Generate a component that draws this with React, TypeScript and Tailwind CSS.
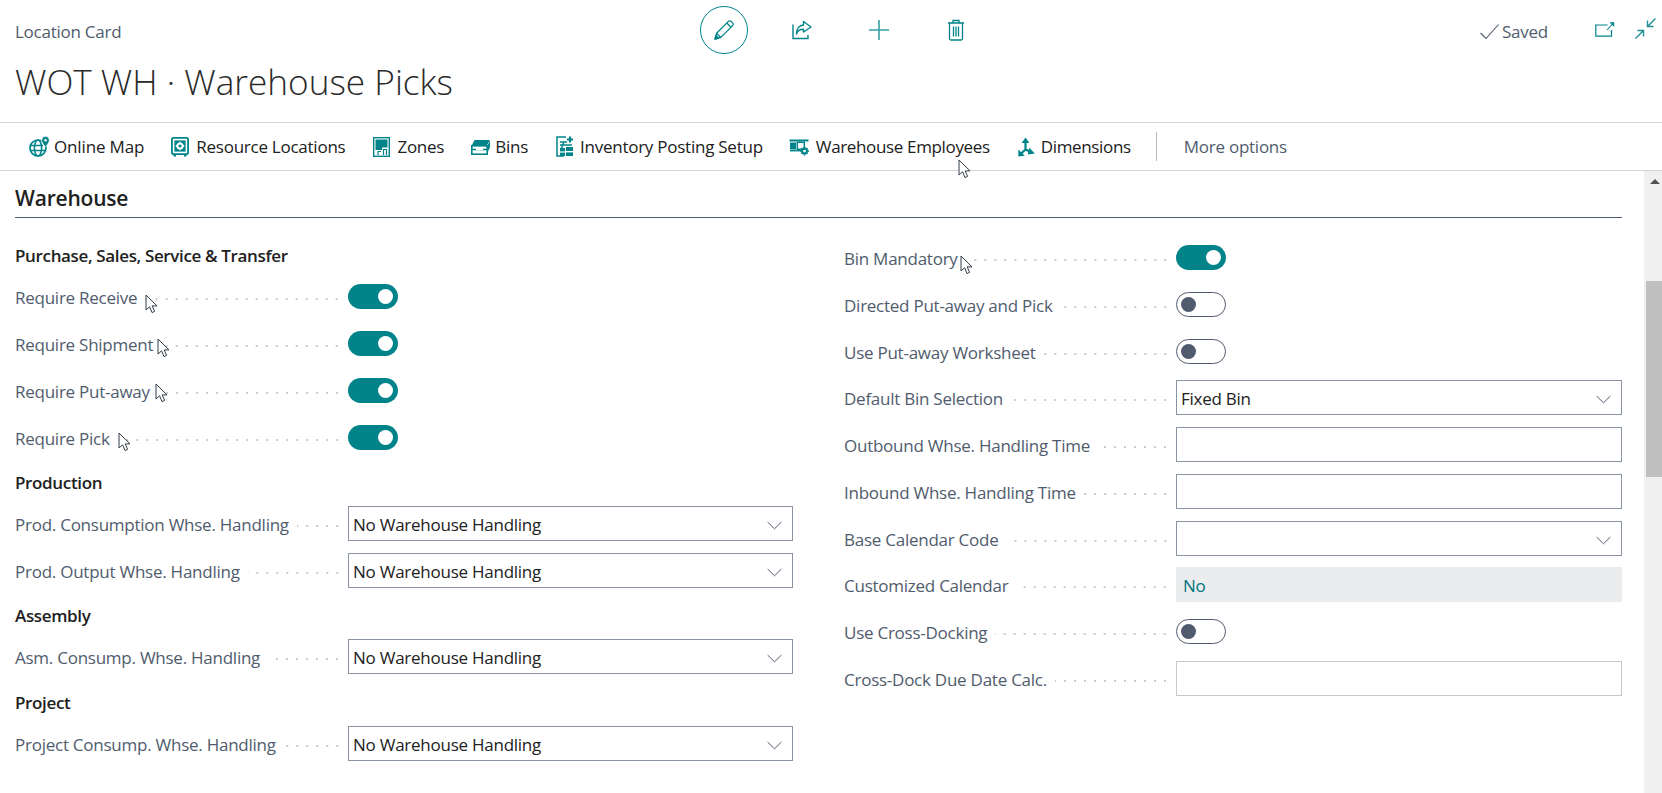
import React from "react";

const T = "#00848a";
const FONT = "font-['Open_Sans','Noto_Sans',sans-serif]";

function Cursor({ className }: { className: string }) {
  return (
    <svg className={`absolute ${className}`} width="13" height="20" viewBox="0 0 13 20">
      <path d="M1 1V16L4.6 12.8L7 18.6L9.6 17.4L7.2 11.9H12Z" fill="#fff" stroke="#333c48" strokeWidth="1" strokeLinejoin="round" />
    </svg>
  );
}

function Leader() {
  return (
    <div className="flex-1 h-[6px] mt-[4px] ml-[8px] mr-[6px] bg-[radial-gradient(circle,#c9cbce_1.1px,transparent_1.4px)] bg-[length:10px_6px] bg-right bg-repeat-x" />
  );
}

function Toggle({ on }: { on?: boolean }) {
  return on ? (
    <div className="w-[50px] h-[25px] rounded-full bg-[#00848a] flex items-center justify-end pr-[5px]">
      <div className="w-[15px] h-[15px] rounded-full bg-white" />
    </div>
  ) : (
    <div className="w-[50px] h-[25px] rounded-full bg-white border border-[#505c6d] flex items-center pl-[4px]">
      <div className="w-[15px] h-[15px] rounded-full bg-[#505c6d]" />
    </div>
  );
}

function Chevron() {
  return (
    <svg width="15" height="9" viewBox="0 0 15 9" className="shrink-0 mt-[3px]">
      <path d="M0.6 1L7.5 7.8L14.4 1" fill="none" stroke="#505c6d" strokeWidth="1" />
    </svg>
  );
}

function Select({ value }: { value?: string }) {
  return (
    <div className="w-full h-[35px] border border-[#8a94a0] flex items-center justify-between pl-[4px] pr-[10px] text-[17px] tracking-[-0.25px] text-[#212121]">
      <span className="pt-[2px]">{value}</span>
      <Chevron />
    </div>
  );
}

function Input({ disabled }: { disabled?: boolean }) {
  return <div className={`w-full h-[35px] border ${disabled ? "border-[#c8c8c8]" : "border-[#8a94a0]"}`} />;
}

function Row({ label, children, right, tight }: { label: string; children: React.ReactNode; right?: boolean; tight?: boolean }) {
  return (
    <div className={`flex items-center h-[35px] ${tight ? "mb-[11px]" : "mb-[12px]"}`}>
      <div className={`flex items-center shrink-0 ${right ? "w-[332px]" : "w-[333px]"} text-[17px] tracking-[-0.25px] text-[#505c6d]`}>
        <span className="whitespace-nowrap pt-[2px]">{label}</span>
        <Leader />
      </div>
      <div className="flex-1 flex items-center">{children}</div>
    </div>
  );
}

function Group({ children, last }: { children: string; last?: boolean }) {
  return (
    <div className={`${last ? "mt-[16px]" : "mt-[15px]"} mb-[12px] h-[24px] pt-[1px] leading-[24px] text-[17px] tracking-[-0.35px] font-semibold text-[#212121]`}>
      {children}
    </div>
  );
}

function GlobeIcon() {
  return (
    <svg width="21" height="21" viewBox="0 0 21 21" fill="none">
      <circle cx="9" cy="12" r="8" stroke={T} strokeWidth="1.7" />
      <ellipse cx="9" cy="12" rx="3.6" ry="8" stroke={T} strokeWidth="1.5" />
      <path d="M1.5 9.5H14M1.5 14.5H16.5" stroke={T} strokeWidth="1.5" />
      <path d="M16.5 0.3a3.9 3.9 0 0 1 3.9 3.9c0 2.5-3.9 6.8-3.9 6.8s-3.9-4.3-3.9-6.8a3.9 3.9 0 0 1 3.9-3.9Z" fill={T} stroke="#fff" strokeWidth="0.8" />
      <circle cx="16.5" cy="4.2" r="1.2" fill="#fff" />
    </svg>
  );
}

function ResourceIcon() {
  return (
    <svg width="18" height="20" viewBox="0 0 18 20" fill="none">
      <rect x="0.9" y="0.9" width="16.2" height="16.2" rx="1.6" stroke={T} strokeWidth="1.8" />
      <rect x="3.4" y="3.4" width="11.2" height="11.2" fill={T} />
      <circle cx="9" cy="9" r="2.6" stroke="#fff" strokeWidth="2" />
      <path d="M9 4.8V6M9 12V13.2M4.8 9H6M12 9H13.2" stroke="#fff" strokeWidth="1.4" />
      <path d="M2.5 17.5V19.5H5V17.5M13 17.5V19.5H15.5V17.5" fill={T} />
    </svg>
  );
}

function ZonesIcon() {
  return (
    <svg width="17" height="20" viewBox="0 0 17 20" fill="none">
      <rect x="0.7" y="0.7" width="15.6" height="18.6" stroke={T} strokeWidth="1.4" />
      <path d="M2.5 2.5H14.5V10.5H9V13H2.5Z" fill={T} />
      <path d="M5 18V14.5H8M10.5 18V12.5H13.5V18" stroke={T} strokeWidth="1.2" />
    </svg>
  );
}

function BinsIcon() {
  return (
    <svg width="20" height="16" viewBox="0 0 20 16" fill="none">
      <path d="M3.5 1H19L16 6H1Z" fill={T} />
      <rect x="0.8" y="6.8" width="15.4" height="8.4" stroke={T} strokeWidth="1.6" />
      <path d="M0.8 10.5H16" stroke={T} strokeWidth="1.5" />
      <rect x="5" y="9" width="7" height="2" fill="#fff" />
      <path d="M19 1.5V8L16.5 14V6.5Z" fill={T} />
    </svg>
  );
}

function InventoryIcon() {
  return (
    <svg width="18" height="21" viewBox="0 0 18 21" fill="none">
      <path d="M10 1H1V20H8" stroke={T} strokeWidth="1.5" />
      <path d="M14 0.5V6.5M11 3.5H17" stroke={T} strokeWidth="2.2" />
      <path d="M4 6H11M4 9H16" stroke={T} strokeWidth="1.6" />
      <path d="M8 6L5 13" stroke={T} strokeWidth="1.4" />
      <rect x="4" y="12" width="5" height="3.4" fill={T} />
      <rect x="10" y="11" width="7" height="4" fill={T} />
      <rect x="4" y="16.6" width="5" height="3.4" fill={T} />
      <rect x="10" y="16.4" width="7" height="3.6" fill={T} />
    </svg>
  );
}

function EmployeesIcon() {
  return (
    <svg width="21" height="18" viewBox="0 0 21 18" fill="none">
      <path d="M0.5 2.5H19.5" stroke={T} strokeWidth="2" />
      <rect x="1" y="4.5" width="6" height="7" fill={T} />
      <rect x="8.3" y="4.3" width="7" height="7" stroke={T} strokeWidth="1.5" />
      <rect x="1" y="12" width="11" height="1.4" fill={T} />
      <circle cx="15.5" cy="13" r="2.4" stroke={T} strokeWidth="2" />
      <path d="M15.5 8.8V10.4M15.5 15.6V17.4M11.2 13H12.8M18.2 13H20M12.5 10L13.6 11.1M17.4 14.9L18.5 16M18.5 10L17.4 11.1M13.6 14.9L12.5 16" stroke={T} strokeWidth="1.5" />
    </svg>
  );
}

function DimensionsIcon() {
  return (
    <svg width="17" height="20" viewBox="0 0 17 20" fill="none">
      <path d="M7.5 5V12.5L2.5 17M7.5 12.5L13 15" stroke={T} strokeWidth="2.2" />
      <path d="M7.5 0.5L3.6 6H11.4Z" fill={T} />
      <path d="M0.3 12.6V19.6L6.8 18.8Z" fill={T} />
      <path d="M16.8 16.6L11.4 10.8L9.8 17.6Z" fill={T} />
    </svg>
  );
}

function Tool({ icon, label, className, textClass }: { icon: React.ReactNode; label: string; className: string; textClass?: string }) {
  return (
    <div className={`flex items-center ${className}`}>
      {icon}
      <span className={`pt-[1px] text-[17px] ${textClass ?? "tracking-[-0.25px]"} text-[#212121] whitespace-nowrap`}>{label}</span>
    </div>
  );
}

export default function App() {
  return (
    <div className={`relative w-[1662px] h-[793px] overflow-hidden bg-white ${FONT}`}>
      {/* Header */}
      <div className="flex h-[122px]">
        <div className="w-[700px] shrink-0 pl-[15px] pt-[20px]">
          <div className="h-[24px] leading-[24px] text-[17px] tracking-[-0.25px] text-[#505c6d]">Location Card</div>
          <div className="mt-[13px] h-[48px] leading-[48px] text-[35.2px] font-light text-[#2a2a2a] whitespace-nowrap">WOT WH · Warehouse Picks</div>
        </div>
        <div className="flex items-start pt-[6px]">
          <div className="w-[48px] h-[48px] rounded-full border border-[#00848a] flex items-center justify-center">
            <svg width="22" height="22" viewBox="0 0 22 22" fill="none" stroke={T} strokeWidth="1.3" strokeLinejoin="round">
              <path d="M2 20L3.6 14.2L15.4 2.4a1.9 1.9 0 0 1 2.7 0l1.5 1.5a1.9 1.9 0 0 1 0 2.7L7.8 18.4Z" />
              <path d="M3.6 14.2L7.8 18.4M13.8 4L18 8.2" />
              <path d="M2 20L3 16.4L5.6 19Z" fill={T} />
            </svg>
          </div>
          <div className="ml-[15px] w-[77px] h-[48px] flex items-center justify-center">
            <svg width="20" height="20" viewBox="0 0 20 20" fill="none" stroke={T} strokeWidth="1.4">
              <path d="M1 4.5V18.5H16V15" />
              <path d="M11.5 1.5L19 7L11.5 12V9.3C8 9.3 5.5 10.8 4.4 14C4.4 9 7 5.3 11.5 5Z" strokeLinejoin="round" />
            </svg>
          </div>
          <div className="w-[77px] h-[48px] flex items-center justify-center">
            <svg width="22" height="22" viewBox="0 0 22 22" fill="none" stroke="#36a0a5" strokeWidth="1.6">
              <path d="M11 1V21M1 11H21" />
            </svg>
          </div>
          <div className="w-[77px] h-[48px] flex items-center justify-center">
            <svg width="18" height="22" viewBox="0 0 18 22" fill="none" stroke={T} strokeWidth="1.3">
              <path d="M1 4H17M6 4V1.5H12V4" />
              <path d="M2.5 4V19.5a1.5 1.5 0 0 0 1.5 1.5h10a1.5 1.5 0 0 0 1.5-1.5V4" />
              <path d="M6.5 7.5V17.5M9 7.5V17.5M11.5 7.5V17.5" />
            </svg>
          </div>
        </div>
        <div className="ml-auto flex items-start pt-[20px] pr-[6px]">
          <div className="flex items-center h-[24px]">
            <svg width="19" height="16" viewBox="0 0 19 16" fill="none" stroke="#505c6d" strokeWidth="1.1">
              <path d="M0.5 9L6 14.5L18.5 0.5" />
            </svg>
            <span className="ml-[3px] text-[17px] tracking-[-0.25px] text-[#505c6d]">Saved</span>
          </div>
          <svg className="ml-[47px] mt-[1px]" width="20" height="16" viewBox="0 0 20 16" fill="none" stroke={T}>
            <path d="M12.5 4H0.8V15.2H16.5V9" strokeWidth="1.2" />
            <path d="M12 9L18 2.5" strokeWidth="1.1" />
            <path d="M15 1.5H19V5.5Z" fill={T} strokeWidth="0.5" />
          </svg>
          <svg className="ml-[20px] -mt-[2px]" width="21" height="21" viewBox="0 0 21 21" fill="none" stroke="#1f8f95" strokeWidth="1.4">
            <path d="M20.5 0.5L12.5 8.5M12.5 2.5V8.5H18.5" />
            <path d="M0.5 20.5L8.5 12.5M8.5 18.5V12.5H2.5" />
          </svg>
        </div>
      </div>

      {/* Toolbar */}
      <div className="flex items-center h-[49px] border-y border-[#d4d4d4] pl-[29px]">
        <Tool icon={<span className="mr-[4px] flex"><GlobeIcon /></span>} label="Online Map" className="" textClass="tracking-[-0.15px]" />
        <Tool icon={<span className="mr-[7px] flex"><ResourceIcon /></span>} label="Resource Locations" className="ml-[27px]" />
        <Tool icon={<span className="mr-[7px] flex"><ZonesIcon /></span>} label="Zones" className="ml-[28px]" />
        <Tool icon={<span className="mr-[4px] flex"><BinsIcon /></span>} label="Bins" className="ml-[27px]" />
        <Tool icon={<span className="mr-[6px] flex"><InventoryIcon /></span>} label="Inventory Posting Setup" className="ml-[28px]" />
        <Tool icon={<span className="mr-[6px] flex"><EmployeesIcon /></span>} label="Warehouse Employees" className="ml-[26px]" textClass="tracking-[-0.35px]" />
        <Tool icon={<span className="mr-[6px] flex"><DimensionsIcon /></span>} label="Dimensions" className="ml-[28px]" textClass="tracking-[-0.35px]" />
        <div className="ml-[25px] w-px h-[29px] bg-[#b4bac2]" />
        <span className="ml-[27px] pt-[1px] text-[17px] tracking-[-0.25px] text-[#505c6d] whitespace-nowrap">More options</span>
      </div>

      {/* Body */}
      <div className="flex h-[622px]">
        <div className="flex-1 pl-[15px] pr-[22px]">
          <div className="pt-[15px] pb-[7px] border-b border-[#505c6d] text-[21px] tracking-[-0.2px] leading-[24px] font-semibold text-[#212121]">Warehouse</div>
          <div className="grid grid-cols-2 gap-x-[51px]">
            <div className="pt-[10px]">
              <Group>Purchase, Sales, Service &amp; Transfer</Group>
              <Row label="Require Receive"><Toggle on /></Row>
              <Row label="Require Shipment"><Toggle on /></Row>
              <Row label="Require Put-away"><Toggle on /></Row>
              <Row label="Require Pick"><Toggle on /></Row>
              <Group>Production</Group>
              <Row label="Prod. Consumption Whse. Handling"><Select value="No Warehouse Handling" /></Row>
              <Row label="Prod. Output Whse. Handling"><Select value="No Warehouse Handling" /></Row>
              <Group>Assembly</Group>
              <Row label="Asm. Consump. Whse. Handling"><Select value="No Warehouse Handling" /></Row>
              <Group last>Project</Group>
              <Row label="Project Consump. Whse. Handling"><Select value="No Warehouse Handling" /></Row>
            </div>
            <div className="pt-[22px]">
              <Row right label="Bin Mandatory"><Toggle on /></Row>
              <Row right label="Directed Put-away and Pick"><Toggle /></Row>
              <Row right tight label="Use Put-away Worksheet"><Toggle /></Row>
              <Row right label="Default Bin Selection"><Select value="Fixed Bin" /></Row>
              <Row right label="Outbound Whse. Handling Time"><Input /></Row>
              <Row right label="Inbound Whse. Handling Time"><Input /></Row>
              <Row right tight label="Base Calendar Code"><Select /></Row>
              <Row right label="Customized Calendar">
                <div className="w-full h-[35px] bg-[#ebecee] flex items-center pl-[7px] pt-[2px] text-[17px] tracking-[-0.25px] text-[#00747d]">No</div>
              </Row>
              <Row right label="Use Cross-Docking"><Toggle /></Row>
              <Row right label="Cross-Dock Due Date Calc."><Input disabled /></Row>
            </div>
          </div>
        </div>
        {/* Scrollbar */}
        <div className="w-[18px] shrink-0 bg-[#f0f0f0] flex flex-col items-end">
          <div className="w-full flex justify-center pt-[8px] pl-[4px]">
            <div className="w-0 h-0 border-x-[5px] border-x-transparent border-b-[5px] border-b-[#505050]" />
          </div>
          <div className="mt-[97px] w-[16px] h-[196px] bg-[#c0c0c0]" />
        </div>
      </div>

      {/* Mouse cursor trail */}
      <Cursor className="left-[958px] top-[159px]" />
      <Cursor className="left-[145px] top-[294px]" />
      <Cursor className="left-[157px] top-[338px]" />
      <Cursor className="left-[155px] top-[383px]" />
      <Cursor className="left-[118px] top-[432px]" />
      <Cursor className="left-[960px] top-[255px]" />
    </div>
  );
}
